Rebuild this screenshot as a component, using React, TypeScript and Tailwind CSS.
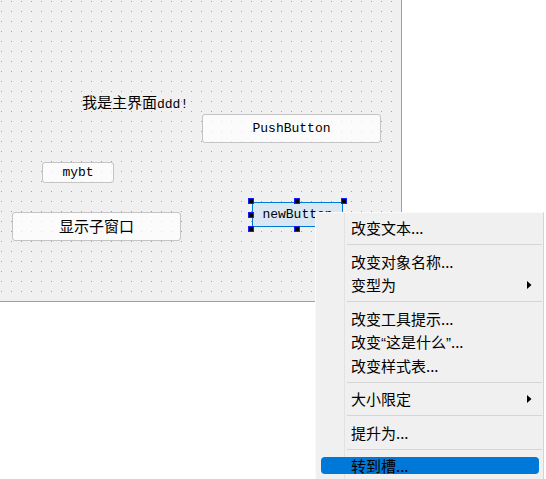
import React from "react";

type Item =
  | { kind: "sep" }
  | { kind: "item"; text: React.ReactNode; arrow?: boolean; active?: boolean };

const q = "font-['Liberation_Sans',sans-serif]";

const items: Item[] = [
  { kind: "item", text: "改变文本..." },
  { kind: "sep" },
  { kind: "item", text: "改变对象名称..." },
  { kind: "item", text: "变型为", arrow: true },
  { kind: "sep" },
  { kind: "item", text: "改变工具提示..." },
  {
    kind: "item",
    text: (
      <>
        改变<span className={q}>“</span>这是什么<span className={q}>”</span>...
      </>
    ),
  },
  { kind: "item", text: "改变样式表..." },
  { kind: "sep" },
  { kind: "item", text: "大小限定", arrow: true },
  { kind: "sep" },
  { kind: "item", text: "提升为..." },
  { kind: "sep" },
  { kind: "item", text: "转到槽...", active: true },
];

const cjk = "font-['Noto_Sans_CJK_SC',sans-serif]";
const mono = "font-['Liberation_Mono','Noto_Sans_CJK_SC',monospace]";

function Handle({ x, y }: { x: number; y: number }) {
  return (
    <div
      className="absolute w-[6px] h-[6px] bg-black border border-[#1a1aff]"
      style={{ left: x, top: y }}
    />
  );
}

export default function App() {
  return (
    <div className="relative w-[546px] h-[479px] overflow-hidden bg-white">
      {/* form canvas */}
      <div className="relative w-[402px] h-[302px] border-r border-b border-[#a0a0a0] bg-[#f0f0f0] bg-[conic-gradient(from_270deg_at_1px_1px,#a0a0a0_90deg,transparent_0)] bg-[length:10px_10px] bg-[position:1px_1px]">
        {/* label */}
        <div className="absolute left-[82px] top-[93px] h-[17px] flex items-baseline text-black whitespace-nowrap">
          <span className={`${cjk} text-[15px] leading-[17px]`}>我是主界面</span>
          <span className={`${mono} text-[13px] leading-[17px]`}>ddd!</span>
        </div>

        {/* PushButton */}
        <div
          className={`absolute left-[202px] top-[114px] w-[179px] h-[29px] rounded-[3px] border border-[#c4c4c4] bg-white/70 flex items-center justify-center ${mono} text-[13px] text-black`}
        >
          PushButton
        </div>

        {/* mybt */}
        <div
          className={`absolute left-[42px] top-[162px] w-[72px] h-[21px] rounded-[3px] border border-[#c4c4c4] bg-white/70 flex items-center justify-center ${mono} text-[13px] text-black`}
        >
          mybt
        </div>

        {/* 显示子窗口 */}
        <div
          className={`absolute left-[12px] top-[212px] w-[169px] h-[29px] rounded-[3px] border border-[#c4c4c4] bg-white/70 flex items-center justify-center ${cjk} text-[15px] text-black`}
        >
          显示子窗口
        </div>

        {/* selected newButton */}
        <div
          className={`absolute left-[252px] top-[202px] w-[91px] h-[25px] border border-[#0078d7] bg-[#dae7f3] flex items-center justify-center ${mono} text-[13px] text-black`}
        >
          newButton
        </div>
        <Handle x={248} y={198} />
        <Handle x={294} y={198} />
        <Handle x={341} y={198} />
        <Handle x={248} y={212} />
        <Handle x={341} y={212} />
        <Handle x={248} y={226} />
        <Handle x={294} y={226} />
        <Handle x={341} y={226} />
      </div>

      {/* context menu */}
      <div
        className={`absolute left-[315px] top-[212px] w-[229px] h-[280px] bg-[#f0f0f0] border border-[#fafafa] border-r-[#d4d4d4] pt-[3px] ${cjk} text-[15px] text-black`}
      >
        <div className="absolute left-[28px] top-0 bottom-0 w-px bg-[#e2e2e2]" />
        {items.map((it, i) =>
          it.kind === "sep" ? (
            <div key={i} className="relative h-[10px] flex items-center">
              <div className="ml-[31px] mr-px h-px w-full bg-[#d5d5d5]" />
            </div>
          ) : (
            <div key={i} className="relative h-[23.5px] flex items-center">
              {it.active && (
                <div className="absolute left-[5px] right-[4px] top-[2.5px] h-[17px] rounded-[4px] bg-[#0078d7]" />
              )}
              <span className="relative pl-[35px] leading-[23.5px] whitespace-nowrap">
                {it.text}
              </span>
              {it.arrow && (
                <svg
                  className="absolute right-[11px] top-1/2 -translate-y-1/2"
                  width="5"
                  height="8"
                  viewBox="0 0 5 8"
                >
                  <polygon points="0,0 4.5,4 0,8" fill="#000" />
                </svg>
              )}
            </div>
          )
        )}
      </div>
    </div>
  );
}
